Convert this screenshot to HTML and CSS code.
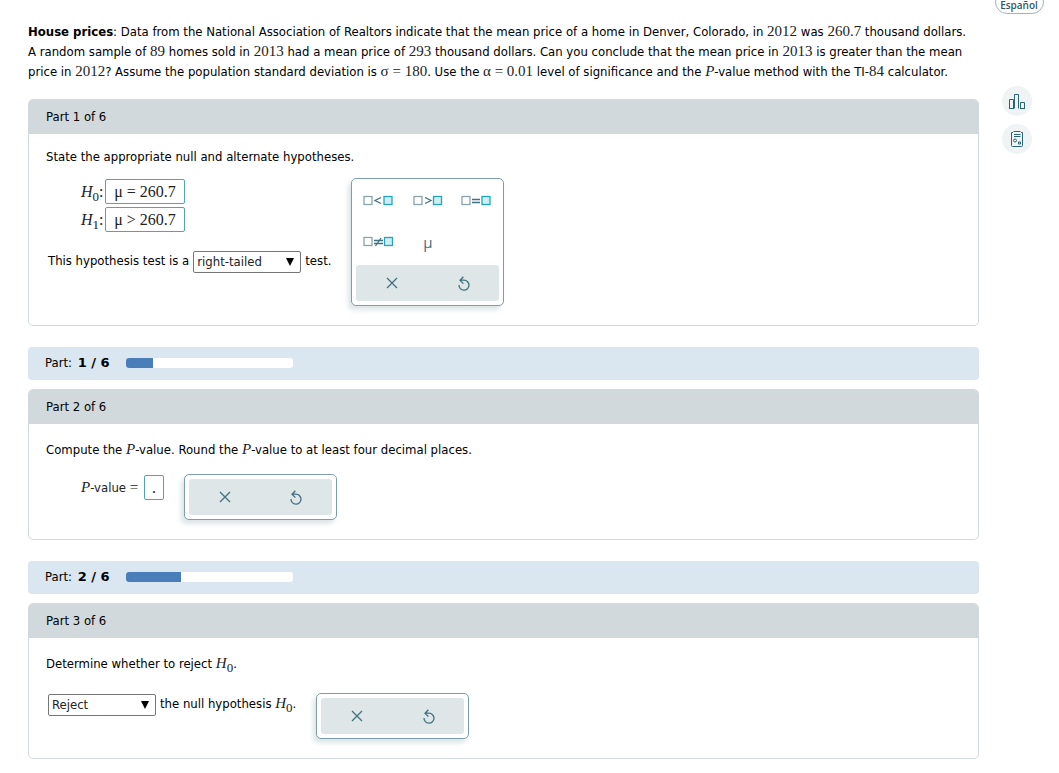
FILE: index.html
```html
<!DOCTYPE html>
<html lang="en">
<head>
    <meta charset="UTF-8">
    <meta name="viewport" content="width=device-width, initial-scale=1.0">
    <title>House prices</title>
    <link rel="stylesheet" href="styles.css">
</head>
<body>
    <!-- shared icons -->
    <svg class="sprite" aria-hidden="true">
        <symbol id="clear" viewBox="0 0 12 12">
            <path d="M1 1L11 11M11 1L1 11" />
        </symbol>
        <symbol id="reset" viewBox="0 0 12 15">
            <path d="M1 9A5 5 0 1 0 6 4.2H2M5.4 .8L2 4.2L5.4 7.6" />
        </symbol>
        <symbol id="arrow" viewBox="0 0 8 8">
            <path d="M0 0H8L4 8Z" />
        </symbol>
    </svg>

    <div class="page">
        <main>
            <p class="problem"><b>House prices</b>: Data from the National Association of Realtors indicate that the mean price of a home in Denver, Colorado, in <span class="math">2012</span> was <span class="math">260.7</span> thousand dollars. A random sample of <span class="math">89</span> homes sold in <span class="math">2013</span> had a mean price of <span class="math">293</span> thousand dollars. Can you conclude that the mean price in <span class="math">2013</span> is greater than the mean price in <span class="math">2012</span>? Assume the population standard deviation is <span class="math">σ = 180</span>. Use the <span class="math">α = 0.01</span> level of significance and the <i class="math">P</i>-value method with the TI-<span class="math">84</span> calculator.</p>

            <section class="part">
                <h2>Part 1 of 6</h2>
                <div class="part-body">
                    <p class="question">State the appropriate null and alternate hypotheses.</p>
                    <div class="work">
                        <div class="answers">
                            <div class="hypothesis">
                                <label for="h0"><i>H</i><sub>0</sub>:</label>
                                <input class="answer" type="text" id="h0" value="μ = 260.7">
                            </div>
                            <div class="hypothesis">
                                <label for="h1"><i>H</i><sub>1</sub>:</label>
                                <input class="answer" type="text" id="h1" value="μ > 260.7">
                            </div>
                            <div class="sentence spaced">
                                <label for="tail">This hypothesis test is a</label>
                                <span class="dropdown">
                                    <select id="tail">
                                        <option>left-tailed</option>
                                        <option selected>right-tailed</option>
                                        <option>two-tailed</option>
                                    </select>
                                    <svg><use href="#arrow" /></svg>
                                </span>
                                <span>test.</span>
                            </div>
                        </div>
                        <div class="palette">
                            <div class="symbols">
                                <button type="button" aria-label="less than">
                                    <svg width="34" height="12" viewBox="0 0 34 12"><rect class="box" x="1" y="1.5" width="8" height="8" /><path d="M18 2.5L12 5.5L18 8.5" /><rect class="slot" x="21" y="1.5" width="8" height="8" /></svg>
                                </button>
                                <button type="button" aria-label="greater than">
                                    <svg width="30" height="12" viewBox="0 0 30 12"><rect class="box" x="1" y="1.5" width="8" height="8" /><path d="M12 2.5L18 5.5L12 8.5" /><rect class="slot" x="20.5" y="1.5" width="8" height="8" /></svg>
                                </button>
                                <button type="button" aria-label="equals">
                                    <svg width="30" height="12" viewBox="0 0 30 12"><rect class="box" x="1" y="1.5" width="8" height="8" /><path d="M11 4.5H19M11 7.5H19" /><rect class="slot" x="21" y="1.5" width="8" height="8" /></svg>
                                </button>
                                <button type="button" aria-label="not equal">
                                    <svg width="34" height="12" viewBox="0 0 34 12"><rect class="box" x="1" y="1.5" width="8" height="8" /><path d="M11 4.5H20M11 7.5H20M12.5 10L18 2" /><rect class="slot" x="21.5" y="1.5" width="8" height="8" /></svg>
                                </button>
                                <button type="button">μ</button>
                            </div>
                            <div class="tools">
                                <button type="button" aria-label="Clear"><svg width="12" height="12"><use href="#clear" /></svg></button>
                                <button type="button" aria-label="Reset"><svg width="12" height="15"><use href="#reset" /></svg></button>
                            </div>
                        </div>
                    </div>
                </div>
            </section>

            <div class="progress">
                <span>Part: <b>1 / 6</b></span>
                <div class="bar"><div class="fill" style="width: 16.67%"></div></div>
            </div>

            <section class="part">
                <h2>Part 2 of 6</h2>
                <div class="part-body">
                    <p class="question with-math">Compute the <i class="math">P</i>-value. Round the <i class="math">P</i>-value to at least four decimal places.</p>
                    <div class="work">
                        <div class="answers">
                            <div class="hypothesis">
                                <label class="wide" for="pvalue"><i class="math">P</i>-value <span class="math">=</span></label>
                                <input class="answer small" type="text" id="pvalue" value=".">
                            </div>
                        </div>
                        <div class="palette">
                            <div class="tools">
                                <button type="button" aria-label="Clear"><svg width="12" height="12"><use href="#clear" /></svg></button>
                                <button type="button" aria-label="Reset"><svg width="12" height="15"><use href="#reset" /></svg></button>
                            </div>
                        </div>
                    </div>
                </div>
            </section>

            <div class="progress">
                <span>Part: <b>2 / 6</b></span>
                <div class="bar"><div class="fill" style="width: 33.33%"></div></div>
            </div>

            <section class="part">
                <h2>Part 3 of 6</h2>
                <div class="part-body">
                    <p class="question with-math with-sub">Determine whether to reject <span class="math"><i>H</i><sub>0</sub></span>.</p>
                    <div class="work">
                        <div class="answers">
                            <div class="sentence">
                                <span class="dropdown">
                                    <select id="decision">
                                        <option>Reject</option>
                                        <option>Do not reject</option>
                                    </select>
                                    <svg><use href="#arrow" /></svg>
                                </span>
                                <label for="decision">the null hypothesis <span class="math"><i>H</i><sub>0</sub></span>.</label>
                            </div>
                        </div>
                        <div class="palette">
                            <div class="tools">
                                <button type="button" aria-label="Clear"><svg width="12" height="12"><use href="#clear" /></svg></button>
                                <button type="button" aria-label="Reset"><svg width="12" height="15"><use href="#reset" /></svg></button>
                            </div>
                        </div>
                    </div>
                </div>
            </section>
        </main>

        <aside>
            <button type="button" class="language">Español</button>
            <button type="button" class="round" aria-label="Data">
                <svg width="18" height="16" viewBox="0 0 18 16"><path d="M1.5 15.5V6.5H5.5V15.5M6.5 15.5V1.5H10.5V15.5M12.5 15.5V9.5H16.5V15.5M1 15.5H6M12 15.5H17" /></svg>
            </button>
            <button type="button" class="round" aria-label="Formulas">
                <svg width="14" height="16" viewBox="0 0 14 16"><path d="M3 1.5H1.5V14.5Q1.5 15.5 2.5 15.5H11.5Q12.5 15.5 12.5 14.5V1.5H11M3.5 .5H10.5M4 3.5H10.5M4 5.5H10.5M8.5 11H10.5V13H8.5Z" /><circle cx="5" cy="9.5" r="1.5" /></svg>
            </button>
        </aside>
    </div>
</body>
</html>
```

FILE: styles.css
```css
* {
    box-sizing: border-box;
}

body {
    margin: 0;
    font-family: "DejaVu Sans Condensed", Tahoma, "DejaVu Sans", sans-serif;
    font-size: 13px;
    line-height: 20px;
    color: #000;
    background: #fff;
}

button, input, select {
    font: inherit;
    color: inherit;
    margin: 0;
    padding: 0;
}

button {
    display: flex;
    align-items: center;
    justify-content: center;
    border: none;
    background: none;
    cursor: pointer;
}

svg {
    display: block;
    fill: none;
    stroke: #40717f;
    stroke-width: 1.3;
}

.sprite {
    position: absolute;
    width: 0;
    height: 0;
}

.page {
    display: flex;
}

main {
    flex: 1;
    min-width: 0;
    padding: 22px 0 13px 28px;
}

.problem {
    margin: 0 0 17px;
    padding-right: 10px;
}

.math {
    font-family: "Liberation Serif", serif;
    font-size: 15px;
    line-height: 10px;
    color: #222;
}

sub {
    font-size: 13px;
    line-height: 8px;
}

.part {
    border: 1px solid #d1d9dc;
    border-radius: 5px;
    overflow: hidden;
}

.part h2 {
    margin: -1px -1px 0;
    padding: 8px 18px 7px;
    font-size: 13px;
    font-weight: normal;
    background: #d1d9dc;
}

.part-body {
    padding: 13px 17px 19px;
}

.question {
    margin: 0 0 11px;
}

.with-math {
    line-height: 26px;
}

.with-sub {
    margin-bottom: 16px;
}

.work {
    display: flex;
    flex-wrap: wrap;
    align-items: flex-start;
    gap: 20px;
}

.answers {
    padding: 1px 0 0 2px;
}

.hypothesis {
    display: flex;
    align-items: center;
    margin: 0 0 3px 33px;
}

.hypothesis label {
    width: 24px;
    font-family: "Liberation Serif", serif;
    font-size: 16px;
    white-space: nowrap;
    color: #222;
}

.hypothesis .wide {
    width: 63px;
    font-family: inherit;
    font-size: 13px;
}

.answer {
    width: 80px;
    height: 25px;
    border: 1px solid #4fa5b0;
    border-radius: 2px;
    font-family: "Liberation Serif", serif;
    font-size: 16px;
    text-align: center;
    color: #222;
}

.small {
    width: 20px;
}

.sentence {
    display: flex;
    align-items: flex-start;
    gap: 4px;
}

.spaced {
    margin-top: 19px;
}

.dropdown {
    position: relative;
}

.dropdown select {
    display: block;
    width: 108px;
    height: 22px;
    padding: 0 3px;
    border: 1px solid #767676;
    border-radius: 2px;
    background: #fff;
    color: #222;
    appearance: none;
}

.dropdown svg {
    position: absolute;
    top: 7px;
    right: 7px;
    width: 8px;
    height: 8px;
    fill: #000;
    stroke: none;
    pointer-events: none;
}

.palette {
    display: flex;
    flex-direction: column;
    gap: 5px;
    width: 153px;
    padding: 4px;
    border: 1px solid #7d9ea9;
    border-radius: 5px;
    background: #fff;
    box-shadow: -3px 4px 5px #dde5e7;
}

.symbols {
    display: grid;
    grid-template-columns: repeat(3, 1fr);
    grid-auto-rows: 36px;
    row-gap: 5px;
}

.symbols button {
    font-family: "Open Sans", sans-serif;
    font-size: 15px;
    color: #40717f;
}

.symbols .box {
    stroke: #8ba3aa;
}

.symbols .slot {
    fill: #cfeef3;
    stroke: #22a6bb;
}

.tools {
    display: grid;
    grid-template-columns: 1fr 1fr;
    height: 36px;
    border-radius: 3px;
    background: #dfe6e8;
}

.progress {
    display: flex;
    align-items: center;
    gap: 16px;
    margin: 21px 0 9px;
    padding: 6px 17px 7px;
    border-radius: 4px;
    background: #dae6f0;
}

.progress b {
    margin-left: 2px;
    font-family: "DejaVu Sans", sans-serif;
}

.bar {
    width: 167px;
    height: 10px;
    border-radius: 3px;
    background: #fff;
    overflow: hidden;
}

.fill {
    height: 100%;
    background: #4a7ebb;
}

aside {
    display: flex;
    flex-direction: column;
    align-items: center;
    gap: 8px;
    width: 80px;
}

.language {
    width: 49px;
    height: 24px;
    margin: -10px 0 64px;
    padding-top: 6px;
    border: 1px solid #9db5bc;
    border-radius: 12px;
    font-family: "Open Sans", sans-serif;
    font-size: 10px;
    line-height: 12px;
    font-weight: 600;
    color: #2f5866;
}

.round {
    width: 30px;
    height: 30px;
    margin-right: 4px;
    border-radius: 50%;
    background: #eff3f4;
}

.round svg {
    stroke: #2b6475;
    stroke-width: 1;
}
```
